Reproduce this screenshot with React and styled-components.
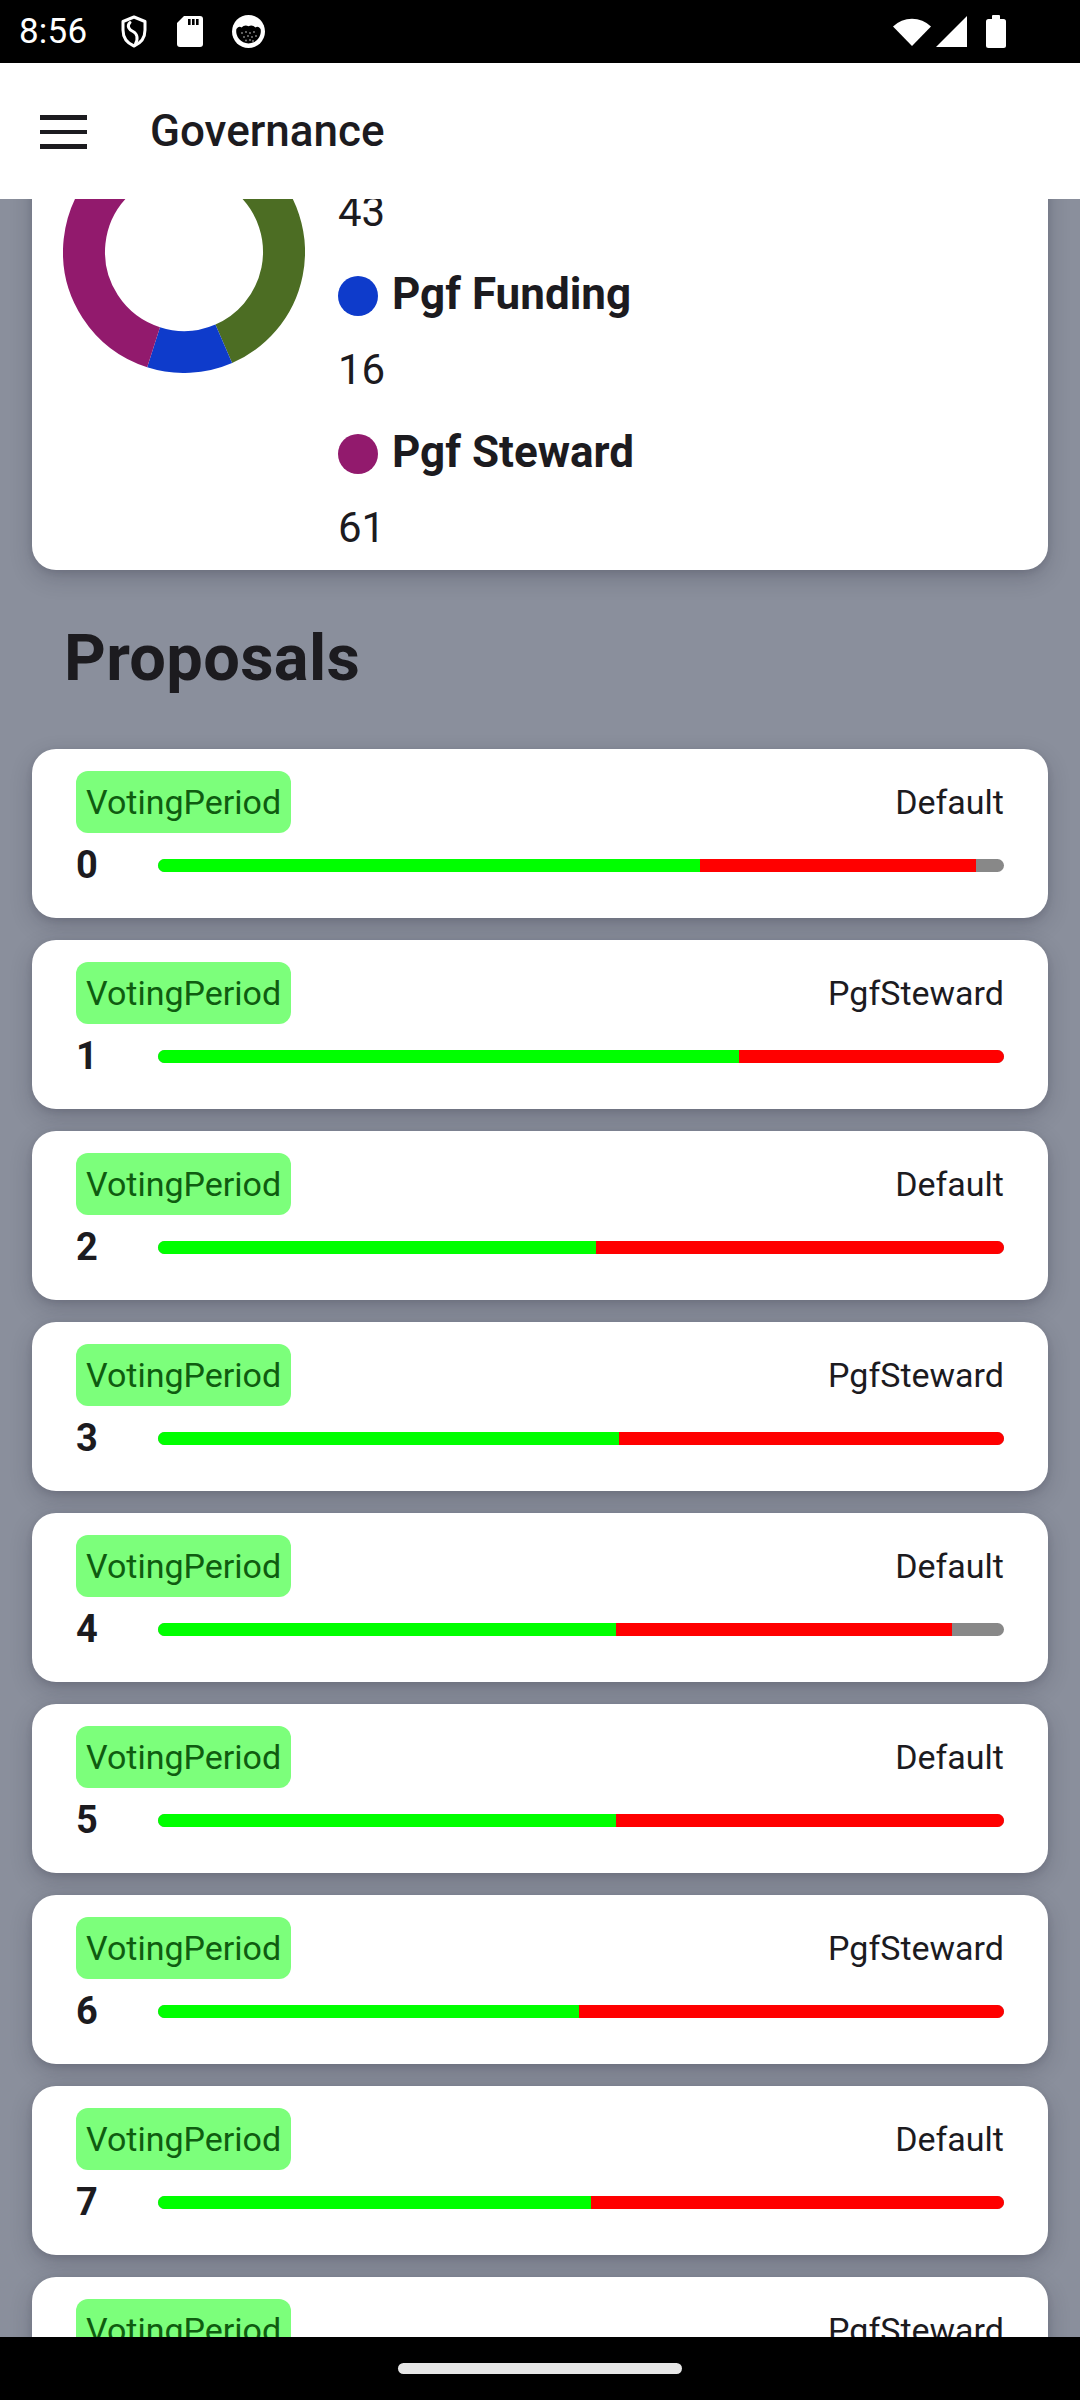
import React from 'react';
import styled, { createGlobalStyle } from 'styled-components';

const GlobalStyle = createGlobalStyle`
  html, body { margin: 0; padding: 0; background: #000; }
  body { font-family: Roboto, "Noto Sans", "Liberation Sans", sans-serif; }
  * { box-sizing: border-box; }
`;

const Screen = styled.div`
  width: 1080px;
  height: 2400px;
  display: flex;
  flex-direction: column;
  overflow: hidden;
  background: #8a8f9c;
`;

const StatusBar = styled.div`
  height: 63px;
  flex: none;
  background: #000;
  color: #fff;
  display: flex;
  align-items: center;
  justify-content: space-between;
  padding: 0 74px 0 19px;
`;

const StatusGroup = styled.div`
  display: flex;
  align-items: center;
  gap: ${p => p.$gap}px;
`;

const Clock = styled.span`
  font-size: 35px;
  line-height: 40px;
  margin-right: 4px;
  letter-spacing: 0.2px;
`;

const StatusSvg = styled.svg`
  display: block;
  flex: none;
  margin-left: ${p => p.$ml || 0}px;
`;

const AppBar = styled.header`
  height: 136px;
  flex: none;
  background: #fff;
  display: flex;
  align-items: center;
  padding-left: 40px;
  gap: 63px;
  position: relative;
  z-index: 2;
`;

const MenuButton = styled.div`
  width: 47px;
  display: flex;
  flex-direction: column;
  gap: 10px;
  margin-top: 2px;
`;

const MenuBar = styled.span`
  display: block;
  height: 4.5px;
  background: #1c1b1f;
`;

const Title = styled.h1`
  margin: 0;
  font-size: 44px;
  font-weight: 500;
  color: #1c1b1f;
  line-height: 52px;
`;

const Viewport = styled.main`
  flex: 1;
  overflow: hidden;
  position: relative;
`;

const ScrollContent = styled.div`
  padding: 0 32px;
  margin-top: ${p => -p.$offset}px;
`;

const Card = styled.section`
  background: #fff;
  border-radius: 24px;
  box-shadow: 0 8px 22px rgba(30, 34, 48, 0.22), 0 2px 6px rgba(30, 34, 48, 0.12);
`;

const ChartCard = styled(Card)`
  display: flex;
  align-items: flex-start;
  gap: 33px;
  padding: 32px 31px 18px;
`;

const DonutWrap = styled.div`
  margin-top: 16px;
  flex: none;
`;

const Legend = styled.div`
  display: flex;
  flex-direction: column;
  gap: 37px;
`;

const LegendItem = styled.div`
  display: flex;
  flex-direction: column;
`;

const LegendLabel = styled.div`
  display: flex;
  align-items: center;
  gap: 14px;
  height: 48px;
  margin-top: -3px;
  font-size: 44px;
  font-weight: 700;
  color: #1c1b1f;
`;

const Dot = styled.span`
  width: 40px;
  height: 40px;
  border-radius: 50%;
  background: ${p => p.$color};
  flex: none;
  margin-top: 3px;
`;

const LegendValue = styled.div`
  margin-top: 28px;
  height: 48px;
  line-height: 48px;
  font-size: 42px;
  color: #1c1b1f;
`;

const SectionTitle = styled.h2`
  margin: 48px 0 51px 32px;
  font-size: 65px;
  line-height: 80px;
  font-weight: 700;
  letter-spacing: 0.3px;
  color: #1c1b1f;
`;

const ProposalList = styled.div`
  display: flex;
  flex-direction: column;
  gap: 22px;
`;

const ProposalCard = styled(Card)`
  height: 169px;
  flex: none;
  padding: 22px 44px 0;
`;

const CardHeader = styled.div`
  display: flex;
  align-items: center;
  justify-content: space-between;
  height: 62px;
`;

const Chip = styled.span`
  height: 62px;
  display: flex;
  align-items: center;
  padding: 0 10px;
  border-radius: 12px;
  background: #7cff7b;
  color: #0f5c10;
  font-size: 34px;
`;

const TypeLabel = styled.span`
  font-size: 34px;
  color: #1c1b1f;
`;

const CardBody = styled.div`
  display: flex;
  align-items: center;
  height: 46px;
  margin-top: 9px;
`;

const ProposalId = styled.span`
  width: 82px;
  flex: none;
  font-size: 38px;
  font-weight: 700;
  color: #1c1b1f;
`;

const VoteBar = styled.div`
  flex: 1;
  height: 13px;
  border-radius: 7px;
  overflow: hidden;
  display: flex;
  background: #888888;
`;

const VoteSegment = styled.div`
  height: 100%;
  background: ${p => p.$color};
`;

const NavBar = styled.footer`
  height: 63px;
  flex: none;
  background: #000;
  display: flex;
  align-items: center;
  justify-content: center;
`;

const NavHandle = styled.span`
  width: 284px;
  height: 11px;
  border-radius: 6px;
  background: #e6e6e6;
`;

const chartData = [
  { label: 'Default', value: 43, color: '#4c6d23' },
  { label: 'Pgf Funding', value: 16, color: '#0e3bcb' },
  { label: 'Pgf Steward', value: 61, color: '#921a6d' },
];

const proposals = [
  { id: 0, type: 'Default', yes: 64.1, no: 32.6 },
  { id: 1, type: 'PgfSteward', yes: 68.7, no: 31.3 },
  { id: 2, type: 'Default', yes: 51.8, no: 48.2 },
  { id: 3, type: 'PgfSteward', yes: 54.5, no: 45.5 },
  { id: 4, type: 'Default', yes: 54.1, no: 39.8 },
  { id: 5, type: 'Default', yes: 54.1, no: 45.9 },
  { id: 6, type: 'PgfSteward', yes: 49.8, no: 50.2 },
  { id: 7, type: 'Default', yes: 51.2, no: 48.8 },
  { id: 8, type: 'PgfSteward', yes: 52.0, no: 48.0 },
];

function polar(c, r, deg) {
  const a = (deg * Math.PI) / 180;
  return [c + r * Math.sin(a), c - r * Math.cos(a)];
}

function arcPath(c, r, start, end) {
  const [x1, y1] = polar(c, r, start);
  const [x2, y2] = polar(c, r, end);
  const large = end - start > 180 ? 1 : 0;
  return `M ${x1} ${y1} A ${r} ${r} 0 ${large} 1 ${x2} ${y2}`;
}

function Donut({ data, total, startAngle }) {
  const size = 242;
  const c = size / 2;
  const perUnit = 360 / total;
  let angle = startAngle;
  return (
    <svg width={size} height={size} viewBox={`0 0 ${size} ${size}`}>
      {data.map(d => {
        const s = angle;
        const e = angle + d.value * perUnit;
        angle = e;
        return (
          <path key={d.label} d={arcPath(c, 100, s, e)} fill="none" stroke={d.color} strokeWidth="42" />
        );
      })}
    </svg>
  );
}

function ShieldIcon() {
  return (
    <StatusSvg width="28" height="33" viewBox="0 0 28 33">
      <path d="M14 2 L25 6.5 V15 C25 23 20 28.5 14 31 C8 28.5 3 23 3 15 V6.5 Z" fill="none" stroke="#fff" strokeWidth="3" strokeLinejoin="round" />
      <path d="M10 7.5 C6.5 11 9 14.5 13 16.5 C17 18.5 18.5 23 15.5 29" fill="none" stroke="#fff" strokeWidth="3" strokeLinecap="round" />
    </StatusSvg>
  );
}

function SdIcon() {
  return (
    <StatusSvg width="26" height="31" viewBox="0 0 26 31">
      <path d="M7 0 H23 A3 3 0 0 1 26 3 V28 A3 3 0 0 1 23 31 H3 A3 3 0 0 1 0 28 V7 Z" fill="#fff" />
      <rect x="11" y="3" width="2.6" height="6" fill="#000" />
      <rect x="15" y="3" width="2.6" height="6" fill="#000" />
      <rect x="19" y="3" width="2.6" height="6" fill="#000" />
    </StatusSvg>
  );
}

function FaceIcon() {
  const dots = [[10, 18], [14, 17], [18, 18], [22, 17], [12, 22], [16, 21], [20, 22], [24, 21], [14, 25.5], [18, 25], [21, 26]];
  return (
    <StatusSvg width="33" height="33" viewBox="0 0 33 33">
      <circle cx="16.5" cy="16.5" r="16.5" fill="#fff" />
      <path d="M4.4 14 Q7 10.5 9.5 12.5 Q12.5 9.5 16.5 11.2 Q20.5 9.5 23.5 12.5 Q26 10.5 28.6 14 A12.3 12.3 0 1 1 4.4 14 Z" fill="#000" />
      {dots.map(([x, y], i) => (
        <circle key={i} cx={x} cy={y} r="0.9" fill="#8a8a8a" />
      ))}
    </StatusSvg>
  );
}

function WifiIcon() {
  return (
    <StatusSvg width="38" height="28" viewBox="0 0 38 28">
      <path d="M0 8.5 A27 27 0 0 1 38 8.5 L19 28 Z" fill="#fff" />
    </StatusSvg>
  );
}

function SignalIcon() {
  return (
    <StatusSvg width="31" height="31" viewBox="0 0 31 31">
      <path d="M31 0 V31 H0 Z" fill="#fff" />
    </StatusSvg>
  );
}

function BatteryIcon() {
  return (
    <StatusSvg width="20" height="33" viewBox="0 0 20 33" $ml={14}>
      <rect x="6" y="0" width="8" height="5" rx="1" fill="#fff" />
      <rect x="0" y="4" width="20" height="29" rx="2.5" fill="#fff" />
    </StatusSvg>
  );
}

export default function App() {
  return (
    <>
      <GlobalStyle />
      <Screen>
        <StatusBar>
          <StatusGroup $gap={29}>
            <Clock>8:56</Clock>
            <ShieldIcon />
            <SdIcon />
            <FaceIcon />
          </StatusGroup>
          <StatusGroup $gap={5}>
            <WifiIcon />
            <SignalIcon />
            <BatteryIcon />
          </StatusGroup>
        </StatusBar>

        <AppBar>
          <MenuButton>
            <MenuBar />
            <MenuBar />
            <MenuBar />
          </MenuButton>
          <Title>Governance</Title>
        </AppBar>

        <Viewport>
          <ScrollContent $offset={116}>
            <ChartCard>
              <DonutWrap>
                <Donut data={chartData} total={140} startAngle={46} />
              </DonutWrap>
              <Legend>
                {chartData.map(d => (
                  <LegendItem key={d.label}>
                    <LegendLabel>
                      <Dot $color={d.color} />
                      {d.label}
                    </LegendLabel>
                    <LegendValue>{d.value}</LegendValue>
                  </LegendItem>
                ))}
              </Legend>
            </ChartCard>

            <SectionTitle>Proposals</SectionTitle>

            <ProposalList>
              {proposals.map(p => (
                <ProposalCard key={p.id}>
                  <CardHeader>
                    <Chip>VotingPeriod</Chip>
                    <TypeLabel>{p.type}</TypeLabel>
                  </CardHeader>
                  <CardBody>
                    <ProposalId>{p.id}</ProposalId>
                    <VoteBar>
                      <VoteSegment $color="#00ff00" style={{ width: `${p.yes}%` }} />
                      <VoteSegment $color="#ff0000" style={{ width: `${p.no}%` }} />
                    </VoteBar>
                  </CardBody>
                </ProposalCard>
              ))}
            </ProposalList>
          </ScrollContent>
        </Viewport>

        <NavBar>
          <NavHandle />
        </NavBar>
      </Screen>
    </>
  );
}
